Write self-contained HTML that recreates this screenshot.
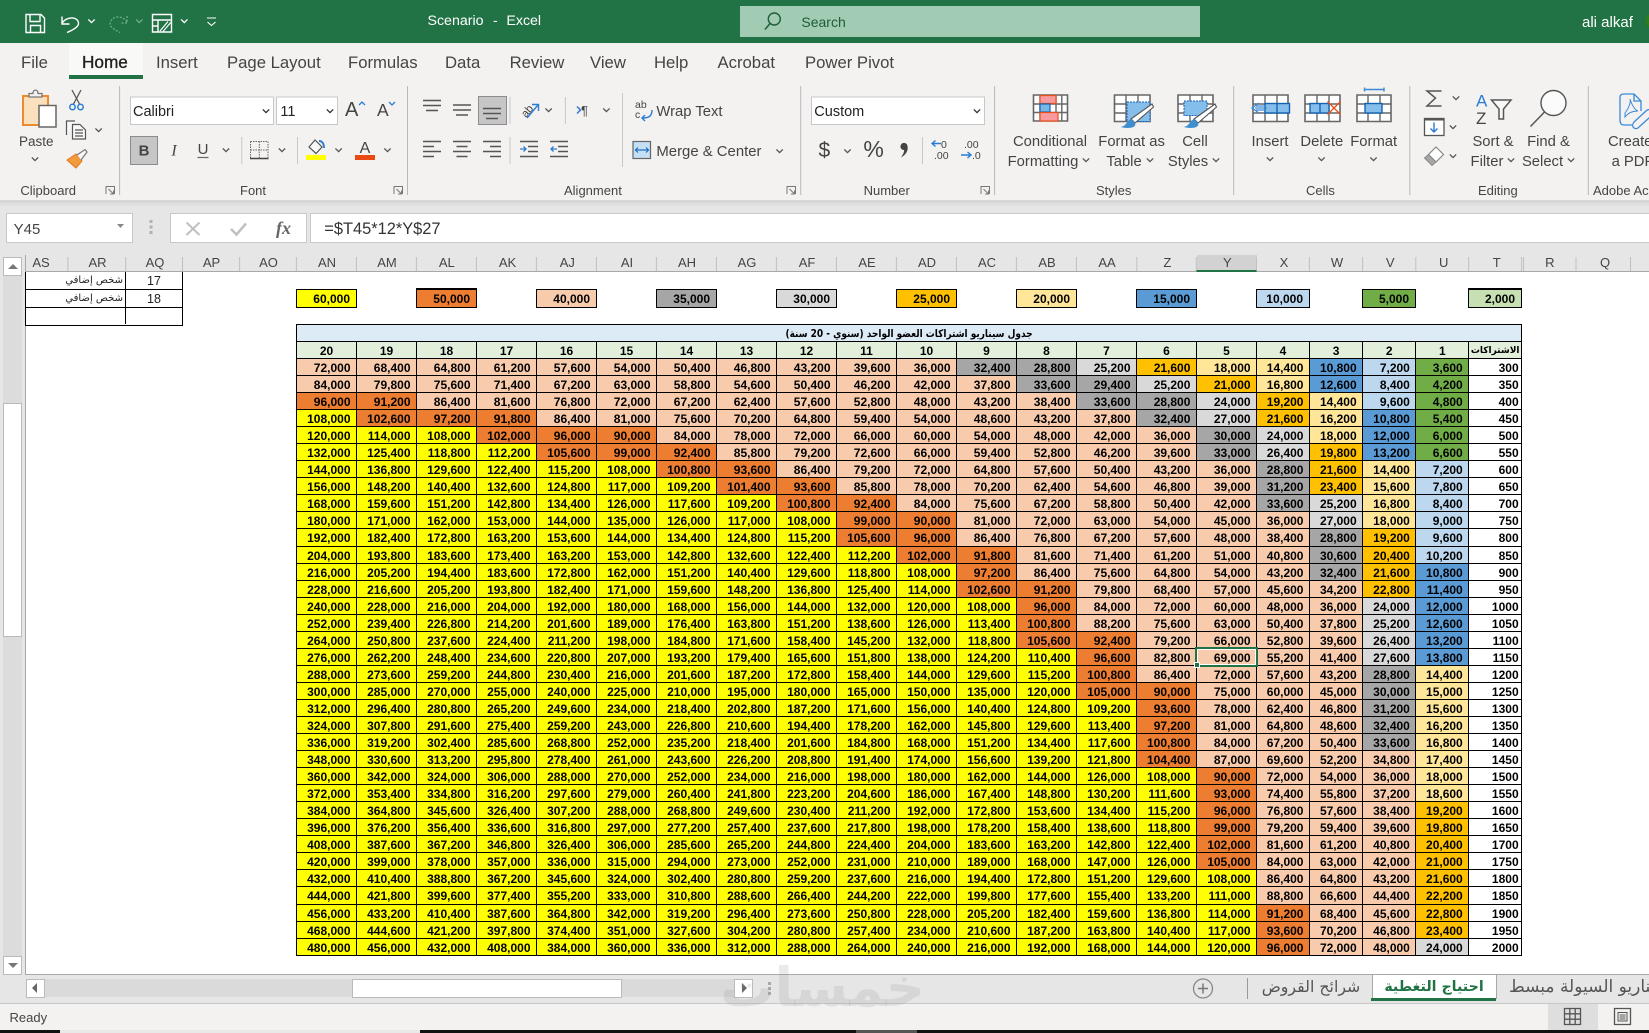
<!DOCTYPE html>
<html><head><meta charset="utf-8"><title>Scenario - Excel</title>
<style>
html,body{margin:0;padding:0;width:1649px;height:1033px;overflow:hidden;background:#fff;font-family:"Liberation Sans","DejaVu Sans",sans-serif}
.a{position:absolute}
#t{position:absolute;left:296px;top:324px;display:grid;background:#000;padding:1px;gap:1px;
grid-template-columns:repeat(14,59px) 58.9px 59.2px 51.9px 52.2px 52.2px 51.9px 51.9px;grid-template-rows:16px 16px;grid-auto-rows:16.06px}
#t b,.k{display:block;background:#ff0;text-align:right;padding-right:5.5px;font:bold 12px/18.5px "Liberation Sans",sans-serif;color:#000;overflow:hidden;white-space:nowrap}
#t .ti{grid-column:1/-1;background:#ddebf7;text-align:center;padding:0;font:bold 10.5px/16px "DejaVu Sans",sans-serif;direction:rtl}
#t .h{background:#e2efda;text-align:center;padding:0}
#t .ar{background:#e2efda;text-align:center;padding:0;font:bold 9px/18px "DejaVu Sans",sans-serif}
#t .w{background:#fff;padding-right:2.5px}
.g{background:#70ad47!important}.l{background:#bdd7ee!important}.b{background:#5b9bd5!important}.n{background:#ffe699!important}.e{background:#ffc000!important}.c{background:#d9d9d9!important}.d{background:#a6a6a6!important}.p{background:#f8cbad!important}.o{background:#ed7d31!important}.y{background:#ff0!important}
#t .s{position:relative;outline:2px solid #217346;outline-offset:0;z-index:2;box-shadow:inset 0 0 0 1px #fff}
.k{position:absolute;top:289px;height:17px;border:1px solid #000;box-sizing:content-box;padding-right:6px;line-height:18px}
</style></head><body>
<svg class="a" style="left:0;top:0" width="1649" height="272" font-family="Liberation Sans" font-size="14" fill="#444">
<defs><path id="c" d="M-3.2-1.6 0 1.6 3.2-1.6" fill="none" stroke-width="1.3"/>
<path id="dl" d="M.5 8V.5H9V8M3 3l5 5M8 4.5V8H4.5" fill="none" stroke="#777"/></defs>
<rect width="1649" height="43" fill="#217346"/>
<rect y="43" width="1649" height="157" fill="#f3f2f1"/>
<rect y="200" width="1649" height="72" fill="#e6e6e6"/>
<rect y="200" width="1649" height="3" fill="#d6d6d6"/><rect y="203" width="1649" height="3" fill="#e0e0e0"/>
<!-- QAT -->
<g fill="none" stroke="#fff" stroke-width="1.4">
<path d="M26 14.5H41L44.5 18V32.5H26ZM30 14.5V21.5H40V14.5M30.5 32.5V25.5H40.5V32.5"/>
<path d="M62 16.5V24H69.5M62 23.5C66 16 79 16 78.5 24C78 27 73 30 67 32.5"/>
<path d="M152.5 14.5H171.5V32H152.5ZM152.5 20H171.5M158 20V32M152.5 26H158"/>
<path d="M172 21L163 31.5M168 21.5L160 31" stroke-width="1.2"/>
<path d="M207 18H216M207.5 22L211.5 25.5L215.5 22" stroke-width="1.1"/>
</g>
<path d="M127 16V23H120M127 22C123 15 111 15 110 24C110 27 115 30 120 32.5" fill="none" stroke="#6fae89" stroke-width="1.3" stroke-dasharray="2 1.5"/>
<use href="#c" x="91.5" y="21" stroke="#fff"/><use href="#c" x="139.3" y="21" stroke="#6fae89"/><use href="#c" x="184.3" y="21" stroke="#fff"/>
<g fill="#fff"><text x="427.5" y="25" font-size="14.2">Scenario</text><text x="493" y="25" font-size="14">-</text><text x="506.4" y="25" font-size="14.2">Excel</text>
<text x="1582" y="27" font-size="15">ali alkaf</text></g>
<rect x="740" y="6" width="460" height="31" fill="#a1ccb3"/>
<circle cx="774.3" cy="19" r="6" fill="none" stroke="#1d5c3a" stroke-width="1.4"/><path d="M770 23.5L765 29.5" stroke="#1d5c3a" stroke-width="1.4"/>
<text x="801.4" y="27" font-size="14" fill="#1f5a3b">Search</text>
<circle cx="1653" cy="21" r="7.5" fill="#2e7d1a"/>
<!-- tabs -->
<rect x="69" y="43" width="74" height="32" fill="#f9f9f8"/><rect x="69" y="75" width="74" height="4" fill="#217346"/>
<g font-size="16.7"><text x="21" y="68">File</text><text x="82" y="68" fill="#222" stroke="#222" stroke-width=".35" font-size="17.2">Home</text><text x="156" y="68">Insert</text><text x="227" y="68">Page Layout</text><text x="348" y="68">Formulas</text><text x="445" y="68">Data</text><text x="509.6" y="68">Review</text><text x="590" y="68">View</text><text x="654" y="68">Help</text><text x="717.5" y="68">Acrobat</text><text x="805" y="68">Power Pivot</text></g>
<!-- separators -->
<path d="M119.6 86V195M407.5 86V195M800.7 86V195M994.6 86V195M1233.7 86V195M1409.8 86V195M1588.3 86V195" stroke="#b8b8b8" stroke-width="1"/>
<path d="M241.8 137V164M297.5 137V164M510 97V124M510 137V164M565.4 97V124M622.5 93V167M922.5 137V164" stroke="#c8c8c8" stroke-width="1"/>
<!-- group labels -->
<g font-size="13"><text x="20.4" y="195">Clipboard</text><text x="240" y="195">Font</text><text x="564" y="195">Alignment</text><text x="863.6" y="195">Number</text><text x="1096" y="195">Styles</text><text x="1306" y="195">Cells</text><text x="1478" y="195">Editing</text><text x="1593" y="195">Adobe Ac</text></g>
<use href="#dl" x="105.5" y="186"/><use href="#dl" x="393.5" y="186"/><use href="#dl" x="786.5" y="186"/><use href="#dl" x="980.5" y="186"/>
<!-- Clipboard -->
<rect x="23" y="96" width="25" height="29" fill="#fae0bd" stroke="#ed8a2f" stroke-width="2"/>
<path d="M29 97V93.5H33C33 89 38 89 38 93.5H42V97Z" fill="#f3f2f1" stroke="#777" stroke-width="1.3"/>
<rect x="39" y="105.5" width="17" height="21.5" fill="#fff" stroke="#666" stroke-width="1.5"/>
<text x="19" y="146" font-size="13.5">Paste</text><use href="#c" x="35" y="159" stroke="#555"/>
<path d="M72 90L79.5 104M81 90L73.5 104" stroke="#555" stroke-width="1.3"/><circle cx="72.5" cy="107" r="2.7" fill="none" stroke="#2b7cd3" stroke-width="1.5"/><circle cx="80.5" cy="107" r="2.7" fill="none" stroke="#2b7cd3" stroke-width="1.5"/>
<path d="M66.5 135V121H75M72.5 124.5H80L85.5 130V139H72.5ZM75 130H83M75 133H83M75 136H83" fill="#f8f8f8" stroke="#555" stroke-width="1.2"/>
<use href="#c" x="98.6" y="130" stroke="#555"/>
<path d="M67 160L76 154L82 161L76 168Z" fill="#f19a3e" stroke="#e8771a"/><path d="M77 155L85 149.5L87 152L81 160" fill="#f6f6f6" stroke="#777" stroke-width="1.2"/>
<!-- Font -->
<rect x="130.5" y="97" width="143" height="27.5" fill="#fff" stroke="#c8c8c8"/><rect x="276.5" y="97" width="61" height="27.5" fill="#fff" stroke="#c8c8c8"/>
<text x="133" y="116" font-size="14.5" fill="#222">Calibri</text><text x="280.4" y="116" font-size="14.5" fill="#222">11</text>
<use href="#c" x="266" y="111" stroke="#333"/><use href="#c" x="330" y="111" stroke="#333"/>
<text x="345" y="116" font-size="20">A</text><text x="377" y="116" font-size="17.5">A</text>
<path d="M359 105L362 102L365 105" fill="none" stroke="#2b7cd3" stroke-width="1.3"/><path d="M389 102L392 105L395 102" fill="none" stroke="#2b7cd3" stroke-width="1.3"/>
<rect x="130.5" y="136.5" width="27" height="28" fill="#c6c6c6" stroke="#8c8c8c"/>
<text x="144" y="155.5" font-size="15" font-weight="bold" text-anchor="middle">B</text>
<text x="174" y="155.5" font-size="16" font-style="italic" text-anchor="middle" font-family="Liberation Serif">I</text>
<text x="203" y="154" font-size="15" text-anchor="middle">U</text><path d="M197.5 157.5H208.5" stroke="#666" stroke-width="1.2"/><use href="#c" x="226" y="150" stroke="#555"/>
<path d="M250.5 141.5H268V158M250.5 141.5V158M259.3 141.5V158M250.5 150H268" fill="none" stroke="#666" stroke-dasharray="1.5 1"/><path d="M250 158.5H268.5" stroke="#444" stroke-width="1.4"/>
<use href="#c" x="282" y="150" stroke="#555"/>
<path d="M309 147L315 140L322 147L316 153.5Z" fill="#f8f8f8" stroke="#555" stroke-width="1.2"/><path d="M319 141C323 141 324 145 324 148" fill="none" stroke="#2b7cd3" stroke-width="2"/>
<rect x="306" y="155" width="20" height="5" fill="#ff0"/><use href="#c" x="338.6" y="150" stroke="#555"/>
<text x="365" y="153" font-size="16" text-anchor="middle">A</text><rect x="355" y="155" width="20" height="5" fill="#ea4a12"/><use href="#c" x="387.5" y="150" stroke="#555"/>
<!-- Alignment -->
<rect x="478.5" y="96.5" width="28" height="28" fill="#c6c6c6" stroke="#8c8c8c"/>
<g fill="none" stroke="#555" stroke-width="1.4">
<path d="M423 100.5H441M423 105.5H441M426 110.5H438"/><path d="M453 105H471M453 110H471M456 115H468"/><path d="M483 108.5H501M483 113.5H501M486 118.5H498"/>
<path d="M423 141.5H441M423 146.5H434M423 151.5H441M423 156.5H434M453 141.5H471M456.5 146.5H467.5M453 151.5H471M456.5 156.5H467.5M483 141.5H501M490 146.5H501M483 151.5H501M490 156.5H501"/>
<path d="M528 141.5H538M528 146.5H538M528 151.5H538M520 156.5H538M520 141.5H538M558 141.5H568M558 146.5H568M558 151.5H568M550 156.5H568M550 141.5H568"/></g>
<path d="M520 149H526M523.5 146.5L526 149L523.5 151.5M557 149H551M553.5 146.5L551 149L553.5 151.5" fill="none" stroke="#2b7cd3" stroke-width="1.3"/>
<text transform="translate(526 118) rotate(-50)" font-size="11">ab</text><path d="M527 118L538 105M532 104.5H538.5V111" fill="none" stroke="#2b7cd3" stroke-width="1.4"/><use href="#c" x="548.6" y="110" stroke="#555"/>
<path d="M577 106.5L580.5 110L577 113.5" fill="none" stroke="#2b7cd3" stroke-width="1.5"/><text x="581" y="115" font-size="13">¶</text><use href="#c" x="606.4" y="110" stroke="#555"/>
<text x="635" y="108" font-size="10.5">ab</text><text x="635" y="118" font-size="10.5">c</text><path d="M652 110C652 117 648 118 642 118M645 115L642 118L645 121" fill="none" stroke="#2b7cd3" stroke-width="1.4"/>
<text x="656.4" y="116" font-size="14.8">Wrap Text</text>
<rect x="633" y="141.5" width="17.5" height="17" fill="#c5dff5" stroke="#666" stroke-width="1.2"/><path d="M636 150H648M638 147.5L635.5 150L638 152.5M646 147.5L648.5 150L646 152.5" fill="none" stroke="#1a6fc4" stroke-width="1.2"/>
<text x="656.4" y="156" font-size="14.9">Merge &amp; Center</text><use href="#c" x="779.6" y="151" stroke="#555"/>
<!-- Number -->
<rect x="811.5" y="97" width="173" height="27.5" fill="#fff" stroke="#c8c8c8"/><text x="814.3" y="116" font-size="14.5" fill="#222">Custom</text><use href="#c" x="977" y="111" stroke="#333"/>
<text x="824.3" y="157" font-size="21" text-anchor="middle">$</text><use href="#c" x="847.5" y="151" stroke="#555"/>
<text x="873.6" y="157" font-size="23" text-anchor="middle">%</text>
<circle cx="904" cy="146.5" r="3.6" fill="#444"/><path d="M907.5 146.5C908.5 151 905.5 155 901 157.5C903.5 153.500 904.5 151.500 904 149.500Z" fill="#444"/>
<text x="941" y="148" font-size="10.5">0</text><text x="934" y="159" font-size="10.5">.00</text><path d="M941 143.5H932M935.5 140.5L932 143.5L935.5 146.5" fill="none" stroke="#2b7cd3" stroke-width="1.4"/>
<text x="964" y="148" font-size="10.5">.00</text><text x="972" y="159" font-size="10.5">.0</text><path d="M961 155H971M967.5 152L971 155L967.5 158" fill="none" stroke="#2b7cd3" stroke-width="1.4"/>
<!-- Styles icons -->
<g fill="#fff" stroke="#666" stroke-width="1.6">
<path d="M1033.5 95H1067.5V121H1033.5Z"/><path d="M1114.5 95H1150V121.5H1114.5Z"/><path d="M1178 95H1213V121.5H1178Z"/><path d="M1253 95H1288V121.5H1253Z"/><path d="M1305 95H1340V121.5H1305Z"/><path d="M1357 95H1391V121.5H1357Z"/>
</g>
<g stroke="#666" stroke-width="1.4" fill="none"><path d="M1033.5 104H1067.5M1033.5 112.5H1067.5M1040 95V121M1056 95V121M1061.8 95V121"/>
<path d="M1114.5 104H1150M1114.5 113H1150M1126 95V121M1138 95V121"/><path d="M1178 104H1213M1178 113H1213M1190 95V121M1202 95V121"/>
<path d="M1253 104H1288M1253 113H1288M1265 95V121M1277 95V121"/><path d="M1305 104H1340M1305 113H1340M1317 95V121M1329 95V121"/><path d="M1357 104H1391M1357 113H1391M1368 95V121M1380 95V121"/></g>
<rect x="1040" y="95.5" width="16" height="8" fill="#f89a9e" stroke="#e8501a" stroke-width="1.2"/><rect x="1040" y="104" width="10" height="8" fill="#7ab7e8" stroke="#1464b4" stroke-width="1.2"/><rect x="1040" y="112.5" width="18" height="8.5" fill="#f89a9e" stroke="#e8501a" stroke-width="1.2"/>
<rect x="1127" y="102" width="23" height="19.5" fill="#85bdeb" stroke="#1464b4" stroke-dasharray="2 1"/>
<rect x="1184" y="101" width="23" height="14.5" fill="#85bdeb" stroke="#1464b4" stroke-dasharray="2 1"/>
<path d="M1152 104L1131 119L1135 123L1153.5 107Z" fill="#fff" stroke="#555" stroke-width="1.1"/><path d="M1131 119C1126 121 1127 126 1120.5 127C1128 129 1137 128 1135 123Z" fill="#3e8ed0"/>
<g transform="translate(63 0)"><path d="M1152 104L1131 119L1135 123L1153.5 107Z" fill="#fff" stroke="#555" stroke-width="1.1"/><path d="M1131 119C1126 121 1127 126 1120.5 127C1128 129 1137 128 1135 123Z" fill="#3e8ed0"/></g>
<g font-size="14.8" text-anchor="middle"><text x="1050" y="146">Conditional</text><text x="1043" y="166">Formatting</text><text x="1131.6" y="146">Format as</text><text x="1124" y="166">Table</text><text x="1195" y="146">Cell</text><text x="1188" y="166">Styles</text>
<text x="1270" y="146">Insert</text><text x="1321.8" y="146">Delete</text><text x="1373.7" y="146">Format</text>
<text x="1493" y="146">Sort &amp;</text><text x="1487" y="166">Filter</text><text x="1548.5" y="146">Find &amp;</text><text x="1542.5" y="166">Select</text></g>
<text x="1608" y="146" font-size="14.8">Create</text><text x="1611.6" y="166" font-size="14.8">a PDF</text>
<use href="#c" x="1086" y="160" stroke="#555"/><use href="#c" x="1150" y="160" stroke="#555"/><use href="#c" x="1216" y="160" stroke="#555"/>
<use href="#c" x="1270" y="159" stroke="#555"/><use href="#c" x="1321.5" y="159" stroke="#555"/><use href="#c" x="1373.5" y="159" stroke="#555"/>
<use href="#c" x="1511" y="160" stroke="#555"/><use href="#c" x="1571" y="160" stroke="#555"/>
<!-- Cells icons -->
<rect x="1265" y="103.5" width="24.5" height="9.5" fill="#85bdeb" stroke="#1464b4" stroke-width="1.4"/><path d="M1277 103.5V113" stroke="#1464b4" stroke-width="1.4"/>
<path d="M1267 108H1255M1259 103L1252 108L1259 113M1266 106H1256M1266 110H1256" fill="none" stroke="#3a8ad8" stroke-width="1.3"/>
<rect x="1310" y="103.5" width="19" height="9.5" fill="#85bdeb" stroke="#1464b4" stroke-width="1.4"/><path d="M1320 103.5V113" stroke="#1464b4" stroke-width="1.4"/>
<path d="M1327.5 101.5L1340.5 114.5M1340.5 101.5L1327.5 114.5" stroke="#e8541a" stroke-width="1.4"/>
<rect x="1365" y="103.5" width="17" height="9.5" fill="#85bdeb" stroke="#1464b4" stroke-width="1.4"/>
<path d="M1364.5 89.5H1384M1364.5 87.5V91.5M1384 87.5V91.5" stroke="#3a8ad8" stroke-width="1.4"/>
<!-- Editing -->
<path d="M1441.5 91H1427L1435.5 98L1427 106H1441.5" fill="none" stroke="#555" stroke-width="1.5"/><use href="#c" x="1456" y="98" stroke="#555"/>
<rect x="1424.5" y="118.5" width="19.5" height="17" fill="#fff" stroke="#555" stroke-width="1.3"/><path d="M1424 119.5H1444" stroke="#555" stroke-width="2"/>
<path d="M1434 122.5V132M1430.5 128.5L1434 132L1437.5 128.5" fill="none" stroke="#2b7cd3" stroke-width="1.4"/><use href="#c" x="1453" y="127" stroke="#555"/>
<path d="M1436 147L1443.5 154.5L1436 162L1428.5 154.5Z" fill="#fff" stroke="#888" stroke-width="1.2"/><path d="M1428.5 154.5L1436 162L1432 165.5L1424.5 158Z" fill="#a6a6a6" stroke="#888"/><use href="#c" x="1453" y="156" stroke="#555"/>
<text x="1476" y="106.5" font-size="17" fill="#2b7cd3">A</text><text x="1476" y="124" font-size="17">Z</text>
<path d="M1491.5 100H1511L1503.5 109V119H1499V109Z" fill="#f8f8f8" stroke="#555" stroke-width="1.5"/>
<circle cx="1553.5" cy="103" r="12.5" fill="#fbfbfb" stroke="#555" stroke-width="1.4"/><path d="M1544.5 112L1530.5 126.5" stroke="#555" stroke-width="1.5"/>
<path d="M1620 98C1620 95 1621 94 1624 94H1634L1641 101V111M1634 94V101H1641M1620 98V120C1620 123 1621 125 1624 125H1632" fill="none" stroke="#3a8ad8" stroke-width="1.3"/>
<path d="M1625 113C1629 108 1631 102 1630 99C1632 105 1635 110 1638 111C1633 111 1628 113 1625 117Z" fill="none" stroke="#3a8ad8"/>
<path d="M1634 122L1646 111M1639 127L1649 118M1634 122C1630 127 1636 131 1639 127M1646 111C1650 107 1654 112 1649 118" fill="none" stroke="#3a8ad8" stroke-width="1.3"/>
<!-- Formula bar -->
<rect x="6.5" y="213.5" width="126" height="29" fill="#fff" stroke="#c8c8c8"/><text x="13.6" y="234" font-size="15">Y45</text><path d="M117 224H124L120.5 228Z" fill="#888"/>
<path d="M149.5 220h3v3h-3zM149.5 225.5h3v3h-3zM149.5 231h3v3h-3z" fill="#b0b0b0"/>
<rect x="170.5" y="213.5" width="136" height="29" fill="#fff" stroke="#c8c8c8"/><rect x="310.5" y="213.5" width="1339" height="29" fill="#fff" stroke="#c8c8c8"/>
<path d="M186.5 222.5L199.5 235M199.5 222.5L186.5 235" stroke="#c0c0c0" stroke-width="2"/><path d="M231 229L236.5 234.5L246 223.5" fill="none" stroke="#c0c0c0" stroke-width="2.5"/>
<text x="276" y="234" font-size="18" font-style="italic" font-weight="bold" font-family="Liberation Serif" fill="#666">fx</text>
<text x="324.3" y="234" font-size="16.4" fill="#333">=$T45*12*Y$27</text>
<!-- Column headers -->
<rect x="1197" y="255" width="60" height="15" fill="#d2d2d2"/>
<path d="M67.9 257V271M125.7 257V271M182.5 257V271M239.6 257V271M296.4 257V271M356.4 257V271M416.4 257V271M476.4 257V271M536.4 257V271M596.4 257V271M656.4 257V271M716.4 257V271M776.4 257V271M836.4 257V271M896.4 257V271M956.4 257V271M1016.4 257V271M1076.4 257V271M1136.8 257V271M1196.3 257V271M1256.5 257V271M1309.4 257V271M1362.6 257V271M1415.8 257V271M1468.7 257V271M1521.6 257V271M1523.6 257V271M1576 257V271M1630.5 257V271" stroke="#c0c0c0"/>
<path d="M25 271.5H1649" stroke="#a8a8a8"/><rect x="1196.5" y="270" width="60" height="2" fill="#217346"/>
<g font-size="13" text-anchor="middle"><text x="41" y="267">AS</text><text x="97.5" y="267">AR</text><text x="155" y="267">AQ</text><text x="211.5" y="267">AP</text><text x="268.5" y="267">AO</text><text x="327" y="267">AN</text><text x="387" y="267">AM</text><text x="446.8" y="267">AL</text><text x="507.5" y="267">AK</text><text x="567.3" y="267">AJ</text><text x="627" y="267">AI</text><text x="687" y="267">AH</text><text x="747" y="267">AG</text><text x="807" y="267">AF</text><text x="867" y="267">AE</text><text x="927" y="267">AD</text><text x="987" y="267">AC</text><text x="1047" y="267">AB</text><text x="1107" y="267">AA</text><text x="1167.3" y="267">Z</text><text x="1227.3" y="267">Y</text><text x="1284" y="267">X</text><text x="1337" y="267">W</text><text x="1390.2" y="267">V</text><text x="1443.7" y="267">U</text><text x="1496.7" y="267">T</text><text x="1549.8" y="267">R</text><text x="1605" y="267">Q</text></g>
<!-- up scroll -->
<rect x="3.5" y="257" width="18.5" height="15" fill="#dcdcdc"/>
</svg>

<!-- left scrollbar -->
<div class="a" style="left:0;top:255px;width:25px;height:720px;background:#e6e6e6"></div>
<div class="a" style="left:25px;top:255px;width:1px;height:720px;background:#a8a8a8"></div>
<div class="a" style="left:3px;top:257px;width:19px;height:718px;background:#dcdcdc"></div>
<div class="a" style="left:3px;top:257px;width:17px;height:17px;background:#fff;border:1px solid #bbb"><div class="a" style="left:4px;top:6px;border:5px solid transparent;border-top:0;border-bottom:5px solid #777"></div></div>
<div class="a" style="left:3px;top:403px;width:17px;height:232px;background:#fff;border:1px solid #bbb"></div>
<div class="a" style="left:3px;top:956px;width:17px;height:17px;background:#fff;border:1px solid #bbb"><div class="a" style="left:4px;top:6px;border:5px solid transparent;border-bottom:0;border-top:5px solid #777"></div></div>

<!-- left mini-table -->
<div class="a" style="left:25px;top:271.5px;width:156px;height:53px;border-right:1px solid #000;border-bottom:1px solid #000;border-left:1px solid #000;box-sizing:content-box"></div>
<div class="a" style="left:25px;top:289px;width:157px;height:1px;background:#000"></div>
<div class="a" style="left:25px;top:307px;width:157px;height:1px;background:#000"></div>
<div class="a" style="left:125px;top:272px;width:1px;height:52px;background:#000"></div>
<div class="a" style="left:30px;top:272px;width:93px;text-align:right;direction:rtl;font:10px/17px 'DejaVu Sans',sans-serif;color:#222">شخص إضافي</div>
<div class="a" style="left:30px;top:290px;width:93px;text-align:right;direction:rtl;font:10px/17px 'DejaVu Sans',sans-serif;color:#222">شخص إضافي</div>
<div class="a" style="left:126px;top:272px;width:56px;text-align:center;font:12.5px/18px 'Liberation Sans',sans-serif;color:#222">17</div>
<div class="a" style="left:126px;top:290px;width:56px;text-align:center;font:12.5px/18px 'Liberation Sans',sans-serif;color:#222">18</div>

<!-- tiles -->
<div class="k y" style="left:296px;width:53px">60,000</div>
<div class="k o" style="left:416px;width:53px;border-top-width:2px;top:288px">50,000</div>
<div class="k p" style="left:536px;width:53px">40,000</div>
<div class="k d" style="left:656px;width:53px">35,000</div>
<div class="k c" style="left:776px;width:53px">30,000</div>
<div class="k e" style="left:896px;width:53px">25,000</div>
<div class="k n" style="left:1016px;width:53px">20,000</div>
<div class="k b" style="left:1136px;width:53px">15,000</div>
<div class="k l" style="left:1256px;width:46px">10,000</div>
<div class="k g" style="left:1362px;width:46px">5,000</div>
<div class="k" style="left:1468px;width:46px;background:#c6e0b4;border-top-width:2px;top:288px">2,000</div>

<!-- main table -->
<div id="t">
<div class="ti" style="background:#ddebf7"><b style="background:none;padding:0;font:bold 10.5px/18px 'DejaVu Sans',sans-serif;text-align:center;overflow:visible;transform:scaleX(.855)">جدول سيناريو اشتراكات العضو الواحد (سنوي - 20 سنة)</b></div>
<b class="h">20</b><b class="h">19</b><b class="h">18</b><b class="h">17</b><b class="h">16</b><b class="h">15</b><b class="h">14</b><b class="h">13</b><b class="h">12</b><b class="h">11</b><b class="h">10</b><b class="h">9</b><b class="h">8</b><b class="h">7</b><b class="h">6</b><b class="h">5</b><b class="h">4</b><b class="h">3</b><b class="h">2</b><b class="h">1</b><b class="ar">الاشتراكات</b>
<b class="p">72,000</b><b class="p">68,400</b><b class="p">64,800</b><b class="p">61,200</b><b class="p">57,600</b><b class="p">54,000</b><b class="p">50,400</b><b class="p">46,800</b><b class="p">43,200</b><b class="p">39,600</b><b class="p">36,000</b><b class="d">32,400</b><b class="d">28,800</b><b class="c">25,200</b><b class="e">21,600</b><b class="n">18,000</b><b class="n">14,400</b><b class="b">10,800</b><b class="l">7,200</b><b class="g">3,600</b><b class="w">300</b>
<b class="p">84,000</b><b class="p">79,800</b><b class="p">75,600</b><b class="p">71,400</b><b class="p">67,200</b><b class="p">63,000</b><b class="p">58,800</b><b class="p">54,600</b><b class="p">50,400</b><b class="p">46,200</b><b class="p">42,000</b><b class="p">37,800</b><b class="d">33,600</b><b class="d">29,400</b><b class="c">25,200</b><b class="e">21,000</b><b class="n">16,800</b><b class="b">12,600</b><b class="l">8,400</b><b class="g">4,200</b><b class="w">350</b>
<b class="o">96,000</b><b class="o">91,200</b><b class="p">86,400</b><b class="p">81,600</b><b class="p">76,800</b><b class="p">72,000</b><b class="p">67,200</b><b class="p">62,400</b><b class="p">57,600</b><b class="p">52,800</b><b class="p">48,000</b><b class="p">43,200</b><b class="p">38,400</b><b class="d">33,600</b><b class="d">28,800</b><b class="c">24,000</b><b class="e">19,200</b><b class="n">14,400</b><b class="l">9,600</b><b class="g">4,800</b><b class="w">400</b>
<b>108,000</b><b class="o">102,600</b><b class="o">97,200</b><b class="o">91,800</b><b class="p">86,400</b><b class="p">81,000</b><b class="p">75,600</b><b class="p">70,200</b><b class="p">64,800</b><b class="p">59,400</b><b class="p">54,000</b><b class="p">48,600</b><b class="p">43,200</b><b class="p">37,800</b><b class="d">32,400</b><b class="c">27,000</b><b class="e">21,600</b><b class="n">16,200</b><b class="b">10,800</b><b class="g">5,400</b><b class="w">450</b>
<b>120,000</b><b>114,000</b><b>108,000</b><b class="o">102,000</b><b class="o">96,000</b><b class="o">90,000</b><b class="p">84,000</b><b class="p">78,000</b><b class="p">72,000</b><b class="p">66,000</b><b class="p">60,000</b><b class="p">54,000</b><b class="p">48,000</b><b class="p">42,000</b><b class="p">36,000</b><b class="d">30,000</b><b class="c">24,000</b><b class="n">18,000</b><b class="b">12,000</b><b class="g">6,000</b><b class="w">500</b>
<b>132,000</b><b>125,400</b><b>118,800</b><b>112,200</b><b class="o">105,600</b><b class="o">99,000</b><b class="o">92,400</b><b class="p">85,800</b><b class="p">79,200</b><b class="p">72,600</b><b class="p">66,000</b><b class="p">59,400</b><b class="p">52,800</b><b class="p">46,200</b><b class="p">39,600</b><b class="d">33,000</b><b class="c">26,400</b><b class="e">19,800</b><b class="b">13,200</b><b class="g">6,600</b><b class="w">550</b>
<b>144,000</b><b>136,800</b><b>129,600</b><b>122,400</b><b>115,200</b><b>108,000</b><b class="o">100,800</b><b class="o">93,600</b><b class="p">86,400</b><b class="p">79,200</b><b class="p">72,000</b><b class="p">64,800</b><b class="p">57,600</b><b class="p">50,400</b><b class="p">43,200</b><b class="p">36,000</b><b class="d">28,800</b><b class="e">21,600</b><b class="n">14,400</b><b class="l">7,200</b><b class="w">600</b>
<b>156,000</b><b>148,200</b><b>140,400</b><b>132,600</b><b>124,800</b><b>117,000</b><b>109,200</b><b class="o">101,400</b><b class="o">93,600</b><b class="p">85,800</b><b class="p">78,000</b><b class="p">70,200</b><b class="p">62,400</b><b class="p">54,600</b><b class="p">46,800</b><b class="p">39,000</b><b class="d">31,200</b><b class="e">23,400</b><b class="n">15,600</b><b class="l">7,800</b><b class="w">650</b>
<b>168,000</b><b>159,600</b><b>151,200</b><b>142,800</b><b>134,400</b><b>126,000</b><b>117,600</b><b>109,200</b><b class="o">100,800</b><b class="o">92,400</b><b class="p">84,000</b><b class="p">75,600</b><b class="p">67,200</b><b class="p">58,800</b><b class="p">50,400</b><b class="p">42,000</b><b class="d">33,600</b><b class="c">25,200</b><b class="n">16,800</b><b class="l">8,400</b><b class="w">700</b>
<b>180,000</b><b>171,000</b><b>162,000</b><b>153,000</b><b>144,000</b><b>135,000</b><b>126,000</b><b>117,000</b><b>108,000</b><b class="o">99,000</b><b class="o">90,000</b><b class="p">81,000</b><b class="p">72,000</b><b class="p">63,000</b><b class="p">54,000</b><b class="p">45,000</b><b class="p">36,000</b><b class="c">27,000</b><b class="n">18,000</b><b class="l">9,000</b><b class="w">750</b>
<b>192,000</b><b>182,400</b><b>172,800</b><b>163,200</b><b>153,600</b><b>144,000</b><b>134,400</b><b>124,800</b><b>115,200</b><b class="o">105,600</b><b class="o">96,000</b><b class="p">86,400</b><b class="p">76,800</b><b class="p">67,200</b><b class="p">57,600</b><b class="p">48,000</b><b class="p">38,400</b><b class="d">28,800</b><b class="e">19,200</b><b class="l">9,600</b><b class="w">800</b>
<b>204,000</b><b>193,800</b><b>183,600</b><b>173,400</b><b>163,200</b><b>153,000</b><b>142,800</b><b>132,600</b><b>122,400</b><b>112,200</b><b class="o">102,000</b><b class="o">91,800</b><b class="p">81,600</b><b class="p">71,400</b><b class="p">61,200</b><b class="p">51,000</b><b class="p">40,800</b><b class="d">30,600</b><b class="e">20,400</b><b class="l">10,200</b><b class="w">850</b>
<b>216,000</b><b>205,200</b><b>194,400</b><b>183,600</b><b>172,800</b><b>162,000</b><b>151,200</b><b>140,400</b><b>129,600</b><b>118,800</b><b>108,000</b><b class="o">97,200</b><b class="p">86,400</b><b class="p">75,600</b><b class="p">64,800</b><b class="p">54,000</b><b class="p">43,200</b><b class="d">32,400</b><b class="e">21,600</b><b class="b">10,800</b><b class="w">900</b>
<b>228,000</b><b>216,600</b><b>205,200</b><b>193,800</b><b>182,400</b><b>171,000</b><b>159,600</b><b>148,200</b><b>136,800</b><b>125,400</b><b>114,000</b><b class="o">102,600</b><b class="o">91,200</b><b class="p">79,800</b><b class="p">68,400</b><b class="p">57,000</b><b class="p">45,600</b><b class="p">34,200</b><b class="e">22,800</b><b class="b">11,400</b><b class="w">950</b>
<b>240,000</b><b>228,000</b><b>216,000</b><b>204,000</b><b>192,000</b><b>180,000</b><b>168,000</b><b>156,000</b><b>144,000</b><b>132,000</b><b>120,000</b><b>108,000</b><b class="o">96,000</b><b class="p">84,000</b><b class="p">72,000</b><b class="p">60,000</b><b class="p">48,000</b><b class="p">36,000</b><b class="c">24,000</b><b class="b">12,000</b><b class="w">1000</b>
<b>252,000</b><b>239,400</b><b>226,800</b><b>214,200</b><b>201,600</b><b>189,000</b><b>176,400</b><b>163,800</b><b>151,200</b><b>138,600</b><b>126,000</b><b>113,400</b><b class="o">100,800</b><b class="p">88,200</b><b class="p">75,600</b><b class="p">63,000</b><b class="p">50,400</b><b class="p">37,800</b><b class="c">25,200</b><b class="b">12,600</b><b class="w">1050</b>
<b>264,000</b><b>250,800</b><b>237,600</b><b>224,400</b><b>211,200</b><b>198,000</b><b>184,800</b><b>171,600</b><b>158,400</b><b>145,200</b><b>132,000</b><b>118,800</b><b class="o">105,600</b><b class="o">92,400</b><b class="p">79,200</b><b class="p">66,000</b><b class="p">52,800</b><b class="p">39,600</b><b class="c">26,400</b><b class="b">13,200</b><b class="w">1100</b>
<b>276,000</b><b>262,200</b><b>248,400</b><b>234,600</b><b>220,800</b><b>207,000</b><b>193,200</b><b>179,400</b><b>165,600</b><b>151,800</b><b>138,000</b><b>124,200</b><b>110,400</b><b class="o">96,600</b><b class="p">82,800</b><b class="p s">69,000</b><b class="p">55,200</b><b class="p">41,400</b><b class="c">27,600</b><b class="b">13,800</b><b class="w">1150</b>
<b>288,000</b><b>273,600</b><b>259,200</b><b>244,800</b><b>230,400</b><b>216,000</b><b>201,600</b><b>187,200</b><b>172,800</b><b>158,400</b><b>144,000</b><b>129,600</b><b>115,200</b><b class="o">100,800</b><b class="p">86,400</b><b class="p">72,000</b><b class="p">57,600</b><b class="p">43,200</b><b class="d">28,800</b><b class="n">14,400</b><b class="w">1200</b>
<b>300,000</b><b>285,000</b><b>270,000</b><b>255,000</b><b>240,000</b><b>225,000</b><b>210,000</b><b>195,000</b><b>180,000</b><b>165,000</b><b>150,000</b><b>135,000</b><b>120,000</b><b class="o">105,000</b><b class="o">90,000</b><b class="p">75,000</b><b class="p">60,000</b><b class="p">45,000</b><b class="d">30,000</b><b class="n">15,000</b><b class="w">1250</b>
<b>312,000</b><b>296,400</b><b>280,800</b><b>265,200</b><b>249,600</b><b>234,000</b><b>218,400</b><b>202,800</b><b>187,200</b><b>171,600</b><b>156,000</b><b>140,400</b><b>124,800</b><b>109,200</b><b class="o">93,600</b><b class="p">78,000</b><b class="p">62,400</b><b class="p">46,800</b><b class="d">31,200</b><b class="n">15,600</b><b class="w">1300</b>
<b>324,000</b><b>307,800</b><b>291,600</b><b>275,400</b><b>259,200</b><b>243,000</b><b>226,800</b><b>210,600</b><b>194,400</b><b>178,200</b><b>162,000</b><b>145,800</b><b>129,600</b><b>113,400</b><b class="o">97,200</b><b class="p">81,000</b><b class="p">64,800</b><b class="p">48,600</b><b class="d">32,400</b><b class="n">16,200</b><b class="w">1350</b>
<b>336,000</b><b>319,200</b><b>302,400</b><b>285,600</b><b>268,800</b><b>252,000</b><b>235,200</b><b>218,400</b><b>201,600</b><b>184,800</b><b>168,000</b><b>151,200</b><b>134,400</b><b>117,600</b><b class="o">100,800</b><b class="p">84,000</b><b class="p">67,200</b><b class="p">50,400</b><b class="d">33,600</b><b class="n">16,800</b><b class="w">1400</b>
<b>348,000</b><b>330,600</b><b>313,200</b><b>295,800</b><b>278,400</b><b>261,000</b><b>243,600</b><b>226,200</b><b>208,800</b><b>191,400</b><b>174,000</b><b>156,600</b><b>139,200</b><b>121,800</b><b class="o">104,400</b><b class="p">87,000</b><b class="p">69,600</b><b class="p">52,200</b><b class="p">34,800</b><b class="n">17,400</b><b class="w">1450</b>
<b>360,000</b><b>342,000</b><b>324,000</b><b>306,000</b><b>288,000</b><b>270,000</b><b>252,000</b><b>234,000</b><b>216,000</b><b>198,000</b><b>180,000</b><b>162,000</b><b>144,000</b><b>126,000</b><b>108,000</b><b class="o">90,000</b><b class="p">72,000</b><b class="p">54,000</b><b class="p">36,000</b><b class="n">18,000</b><b class="w">1500</b>
<b>372,000</b><b>353,400</b><b>334,800</b><b>316,200</b><b>297,600</b><b>279,000</b><b>260,400</b><b>241,800</b><b>223,200</b><b>204,600</b><b>186,000</b><b>167,400</b><b>148,800</b><b>130,200</b><b>111,600</b><b class="o">93,000</b><b class="p">74,400</b><b class="p">55,800</b><b class="p">37,200</b><b class="n">18,600</b><b class="w">1550</b>
<b>384,000</b><b>364,800</b><b>345,600</b><b>326,400</b><b>307,200</b><b>288,000</b><b>268,800</b><b>249,600</b><b>230,400</b><b>211,200</b><b>192,000</b><b>172,800</b><b>153,600</b><b>134,400</b><b>115,200</b><b class="o">96,000</b><b class="p">76,800</b><b class="p">57,600</b><b class="p">38,400</b><b class="e">19,200</b><b class="w">1600</b>
<b>396,000</b><b>376,200</b><b>356,400</b><b>336,600</b><b>316,800</b><b>297,000</b><b>277,200</b><b>257,400</b><b>237,600</b><b>217,800</b><b>198,000</b><b>178,200</b><b>158,400</b><b>138,600</b><b>118,800</b><b class="o">99,000</b><b class="p">79,200</b><b class="p">59,400</b><b class="p">39,600</b><b class="e">19,800</b><b class="w">1650</b>
<b>408,000</b><b>387,600</b><b>367,200</b><b>346,800</b><b>326,400</b><b>306,000</b><b>285,600</b><b>265,200</b><b>244,800</b><b>224,400</b><b>204,000</b><b>183,600</b><b>163,200</b><b>142,800</b><b>122,400</b><b class="o">102,000</b><b class="p">81,600</b><b class="p">61,200</b><b class="p">40,800</b><b class="e">20,400</b><b class="w">1700</b>
<b>420,000</b><b>399,000</b><b>378,000</b><b>357,000</b><b>336,000</b><b>315,000</b><b>294,000</b><b>273,000</b><b>252,000</b><b>231,000</b><b>210,000</b><b>189,000</b><b>168,000</b><b>147,000</b><b>126,000</b><b class="o">105,000</b><b class="p">84,000</b><b class="p">63,000</b><b class="p">42,000</b><b class="e">21,000</b><b class="w">1750</b>
<b>432,000</b><b>410,400</b><b>388,800</b><b>367,200</b><b>345,600</b><b>324,000</b><b>302,400</b><b>280,800</b><b>259,200</b><b>237,600</b><b>216,000</b><b>194,400</b><b>172,800</b><b>151,200</b><b>129,600</b><b>108,000</b><b class="p">86,400</b><b class="p">64,800</b><b class="p">43,200</b><b class="e">21,600</b><b class="w">1800</b>
<b>444,000</b><b>421,800</b><b>399,600</b><b>377,400</b><b>355,200</b><b>333,000</b><b>310,800</b><b>288,600</b><b>266,400</b><b>244,200</b><b>222,000</b><b>199,800</b><b>177,600</b><b>155,400</b><b>133,200</b><b>111,000</b><b class="p">88,800</b><b class="p">66,600</b><b class="p">44,400</b><b class="e">22,200</b><b class="w">1850</b>
<b>456,000</b><b>433,200</b><b>410,400</b><b>387,600</b><b>364,800</b><b>342,000</b><b>319,200</b><b>296,400</b><b>273,600</b><b>250,800</b><b>228,000</b><b>205,200</b><b>182,400</b><b>159,600</b><b>136,800</b><b>114,000</b><b class="o">91,200</b><b class="p">68,400</b><b class="p">45,600</b><b class="e">22,800</b><b class="w">1900</b>
<b>468,000</b><b>444,600</b><b>421,200</b><b>397,800</b><b>374,400</b><b>351,000</b><b>327,600</b><b>304,200</b><b>280,800</b><b>257,400</b><b>234,000</b><b>210,600</b><b>187,200</b><b>163,800</b><b>140,400</b><b>117,000</b><b class="o">93,600</b><b class="p">70,200</b><b class="p">46,800</b><b class="e">23,400</b><b class="w">1950</b>
<b>480,000</b><b>456,000</b><b>432,000</b><b>408,000</b><b>384,000</b><b>360,000</b><b>336,000</b><b>312,000</b><b>288,000</b><b>264,000</b><b>240,000</b><b>216,000</b><b>192,000</b><b>168,000</b><b>144,000</b><b>120,000</b><b class="o">96,000</b><b class="p">72,000</b><b class="p">48,000</b><b class="c">24,000</b><b class="w">2000</b>
</div>
<div class="a" style="left:1194px;top:662px;width:4px;height:4px;background:#217346;border:1px solid #fff;z-index:3"></div>

<!-- bottom bar -->
<div class="a" style="left:0;top:975px;width:1649px;height:28px;background:#e6e6e6"></div>
<div class="a" style="left:25px;top:974px;width:1624px;height:1px;background:#a8a8a8"></div>
<div class="a" style="left:26px;top:979px;width:708px;height:18px;background:#dadada"></div>
<div class="a" style="left:26px;top:979px;width:17px;height:17px;background:#fff;border:1px solid #bbb"><div class="a" style="left:5px;top:3px;border:5px solid transparent;border-left:0;border-right:5px solid #666"></div></div>
<div class="a" style="left:352px;top:979px;width:268px;height:17px;background:#fff;border:1px solid #bbb"></div>
<div class="a" style="left:734px;top:979px;width:17px;height:17px;background:#fff;border:1px solid #bbb"><div class="a" style="left:7px;top:3px;border:5px solid transparent;border-right:0;border-left:5px solid #666"></div></div>
<div class="a" style="left:768px;top:982px;width:3px;height:3px;background:#aaa;box-shadow:0 5px #aaa,0 10px #aaa"></div>
<div class="a" style="left:716px;top:958px;width:213px;height:60px;text-align:center;font:bold 54px/60px 'DejaVu Sans',sans-serif;color:rgba(150,150,150,.2);direction:rtl;white-space:nowrap;z-index:5">خمسات</div>
<!-- tabs -->
<svg class="a" style="left:1190px;top:976px" width="30" height="26"><circle cx="13" cy="12.5" r="9.5" fill="none" stroke="#888" stroke-width="1.3"/><path d="M8 12.5H18M13 7.5V17.5" stroke="#777" stroke-width="1.5"/></svg>
<div class="a" style="left:1247px;top:978px;width:1px;height:21px;background:#999"></div>
<div class="a" style="left:1255px;top:974px;width:112px;text-align:center;font:15.8px/26px 'DejaVu Sans',sans-serif;color:#555;direction:rtl;white-space:nowrap">شرائح القروض</div>
<div class="a" style="left:1372px;top:974px;width:122.5px;height:24px;background:#fff;border:1px solid #a8a8a8;border-bottom:0"></div>
<div class="a" style="left:1371px;top:998px;width:125px;height:2.5px;background:#217346"></div>
<div class="a" style="left:1373px;top:974px;width:122px;text-align:center;font:bold 14.2px/26px 'DejaVu Sans',sans-serif;color:#217346;direction:rtl;white-space:nowrap">احتياج التغطية</div>
<div class="a" style="left:1509px;top:974px;width:230px;font:17px/26px 'DejaVu Sans',sans-serif;color:#555;direction:rtl;white-space:nowrap;text-align:left">سيناريو السيولة مبسط</div>
<!-- status -->
<div class="a" style="left:0;top:1003px;width:1649px;height:1px;background:#c8c8c8"></div>
<div class="a" style="left:0;top:1004px;width:1649px;height:26px;background:#f3f2f1"></div>
<div class="a" style="left:9.5px;top:1009px;font:13px/18px 'Liberation Sans',sans-serif;color:#444">Ready</div>
<div class="a" style="left:1548px;top:1004px;width:50px;height:26px;background:#dedede"></div>
<svg class="a" style="left:1560px;top:1004px" width="80" height="26" fill="none" stroke="#555" stroke-width="1.3"><path d="M4.5 4.5H20.5V20.5H4.5ZM4.5 9.8H20.5M4.5 15.2H20.5M9.8 4.5V20.5M15.2 4.5V20.5"/><path d="M54.5 4.5H70.5V20.5H54.5Z"/><path d="M58 8.5H67V17H58ZM59.5 11H65.5M59.5 13H65.5M59.5 15H65.5" stroke-width="1"/></svg>
<div class="a" style="left:0;top:1030px;width:1649px;height:3px;background:#111"></div>
<div class="a" style="left:60px;top:1030px;width:360px;height:3px;background:#e8e8e8"></div>
<div class="a" style="left:856px;top:1030px;width:61px;height:3px;background:#555"></div>
</body></html>
